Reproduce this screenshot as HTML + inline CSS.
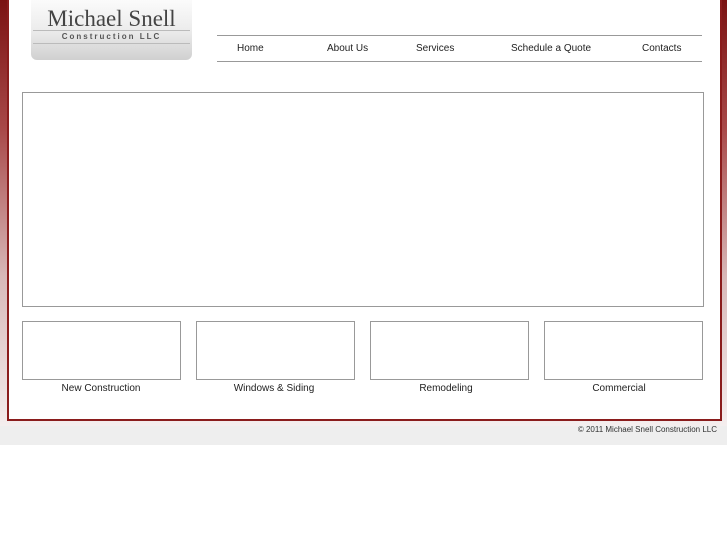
<!DOCTYPE html>
<html><head><style>
body{margin:0;width:727px;height:545px;position:relative;background:#fff;font-family:"Liberation Sans",sans-serif;overflow:hidden}
.side{position:absolute;top:0;left:0;width:727px;height:426px;background:linear-gradient(#7a1212 0%,#a84848 30%,#d8b8b8 65%,#f4eeee 100%)}
.panel{position:absolute;left:7px;top:0;width:711px;height:419px;background:#fff;border:2px solid #8a1c1c;border-top:none}
.footer{position:absolute;left:0;top:426px;width:727px;height:19px;background:#eeeeee;font-size:8px;color:#333;text-align:right;line-height:8px;box-sizing:border-box;padding:0 10px 0 0}
.logo{position:absolute;left:31px;top:0;width:161px;height:60px;border-radius:0 0 6px 6px;background:linear-gradient(#fbfbfb 0%,#ececec 50%,#d0d0d0 100%)}
.logo .t{position:absolute;left:0;width:161px;text-align:center;top:6px;font-family:"Liberation Serif",serif;font-size:23px;color:#444}
.logo .l1{position:absolute;left:2px;right:2px;top:30px;height:1px;background:#bbb}
.logo .l2{position:absolute;left:2px;right:2px;top:43px;height:1px;background:#bbb}
.logo .s{position:absolute;left:0;width:161px;text-align:center;top:32px;font-size:8px;letter-spacing:2px;font-weight:bold;color:#555}
.nav{position:absolute;left:217px;top:35px;width:485px;height:25px;border-top:1px solid #999;border-bottom:1px solid #999;font-size:10px;color:#222}
.nav span{position:absolute;top:7px}
.box{position:absolute;border:1px solid #999;background:#fff}
.cap{position:absolute;font-size:10px;color:#222;text-align:center;width:160px}
</style></head><body>
<div class="side"></div>
<div class="panel"></div>
<div class="logo"><div class="t">Michael Snell</div><div class="l1"></div><div class="s">Construction LLC</div><div class="l2"></div></div>
<div class="nav"><span style="left:20px">Home</span><span style="left:110px">About Us</span><span style="left:199px">Services</span><span style="left:294px">Schedule a Quote</span><span style="left:425px">Contacts</span></div>
<div class="box" style="left:22px;top:92px;width:680px;height:213px"></div>
<div class="box" style="left:22px;top:321px;width:157px;height:57px"></div>
<div class="box" style="left:196px;top:321px;width:157px;height:57px"></div>
<div class="box" style="left:370px;top:321px;width:157px;height:57px"></div>
<div class="box" style="left:544px;top:321px;width:157px;height:57px"></div>
<div class="cap" style="left:21px;top:383px">New Construction</div>
<div class="cap" style="left:194px;top:383px">Windows &amp; Siding</div>
<div class="cap" style="left:366px;top:383px">Remodeling</div>
<div class="cap" style="left:539px;top:383px">Commercial</div>
<div class="footer">© 2011 Michael Snell Construction LLC</div>
</body></html>
